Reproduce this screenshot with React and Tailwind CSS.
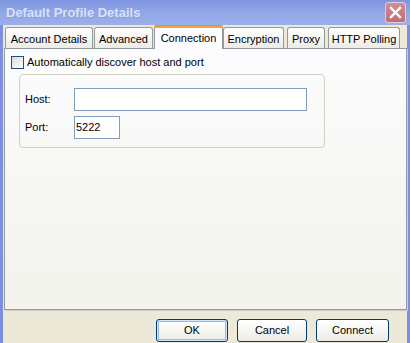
import React from 'react';

// XP-style "Luna" dialog, inactive window state.
const FONT = { fontFamily: '"Liberation Sans", Arial, sans-serif' };

const tabs = [
  { label: 'Account Details', w: 'w-[88px]', ml: 'ml-[1px]' },
  { label: 'Advanced', w: 'w-[59px]', ml: 'ml-[1px]' },
  { label: 'Connection', w: 'w-[69px]', ml: 'ml-[1px]', active: true },
  { label: 'Encryption', w: 'w-[61px]', ml: 'ml-0' },
  { label: 'Proxy', w: 'w-[38px]', ml: 'ml-[3px]' },
  { label: 'HTTP Polling', w: 'w-[72px]', ml: 'ml-[3px]' },
];

const Tab = ({ label, w, ml, active }) =>
  active ? (
    <div
      className={`${w} ${ml} relative z-10 h-[24px] -mb-px rounded-t-[3px] border border-b-0 border-[#919b9c] bg-[#fcfcfe] flex items-center justify-center text-[11px] text-black`}
    >
      <div className="absolute left-[-1px] right-[-1px] top-[-1px] h-[3px] rounded-t-[3px] bg-[#f1a83a] border-t border-[#e68b2c]" />
      <span className="pt-[1px]">{label}</span>
    </div>
  ) : (
    <div
      className={`${w} ${ml} h-[21px] rounded-t-[3px] border border-b-0 border-[#919b9c] bg-gradient-to-b from-white to-[#ecebe6] flex items-center justify-center text-[11px] text-black`}
    >
      <span className="pt-[2px]">{label}</span>
    </div>
  );

const Button = ({ children, isDefault }) => (
  <button
    className={`w-full h-[23px] rounded-[3px] border border-[#003c74] bg-gradient-to-b from-white to-[#ecebe6] text-[11px] text-black ${
      isDefault ? 'shadow-[inset_0_0_0_1px_#cee7ff,inset_0_0_0_2px_#98b8ea]' : ''
    }`}
  >
    {children}
  </button>
);

export default function App() {
  return (
    <div className="w-[410px] h-[343px] flex flex-col bg-[#ece9d8] overflow-hidden" style={FONT}>
      {/* title bar */}
      <div className="h-[25px] shrink-0 flex items-center justify-between bg-gradient-to-b from-[#7d95e0] via-[#91a7e8] to-[#9bb0ea] pl-[6px] pr-[4px]">
        <span
          className="text-[13px] font-bold text-[#d8e2f7]"
          style={{ textShadow: '1px 1px 0 #8a9fdc' }}
        >
          Default Profile Details
        </span>
        <div className="w-[21px] h-[21px] rounded-[3px] border border-[#e6cdd2] bg-gradient-to-b from-[#d48d95] to-[#c06c76] flex items-center justify-center">
          <svg width="13" height="13" viewBox="0 0 13 13">
            <path d="M2 2 L11 11 M11 2 L2 11" stroke="white" strokeWidth="2.4" strokeLinecap="square" />
          </svg>
        </div>
      </div>

      {/* body between blue frame edges */}
      <div className="flex-1 flex border-l-[3px] border-r-[3px] border-[#7e8ee2]">
        <div className="flex-1 flex flex-col pl-[1px]">
          {/* tab strip */}
          <div className="h-[23px] flex items-end">
            {tabs.map((t) => (
              <Tab key={t.label} {...t} />
            ))}
          </div>

          {/* tab page */}
          <div className="h-[262px] border border-[#919b9c] bg-gradient-to-b from-[#fcfcfe] to-[#f3f2ec] shadow-[1px_1px_0_#d0cfc5] pl-[6px] pt-[7px]">
            <label className="h-[13px] flex items-center gap-[3px] text-[11px] text-black">
              <span className="w-[13px] h-[13px] border border-[#1c5180] bg-gradient-to-br from-[#dcdcd5] to-white" />
              <span>Automatically discover host and port</span>
            </label>

            <div className="mt-[5px] ml-[8px] w-[306px] h-[74px] rounded-[4px] border border-[#d0d0bf] pl-[5px] pt-[13px] flex flex-col gap-[5px]">
              <div className="flex items-center">
                <span className="w-[49px] text-[11px] text-black">Host:</span>
                <div className="w-[233px] h-[23px] border border-[#7f9db9] bg-white" />
              </div>
              <div className="flex items-center">
                <span className="w-[49px] text-[11px] text-black">Port:</span>
                <div className="w-[46px] h-[23px] border border-[#7f9db9] bg-white flex items-center pl-[1px] text-[11px] text-black">
                  5222
                </div>
              </div>
            </div>
          </div>

          {/* buttons */}
          <div className="mt-[7px] flex justify-end gap-[9px] pr-[18px]">
            <div className="w-[72px]">
              <Button isDefault>OK</Button>
            </div>
            <div className="w-[70px]">
              <Button>Cancel</Button>
            </div>
            <div className="w-[73px]">
              <Button>Connect</Button>
            </div>
          </div>
        </div>
      </div>
    </div>
  );
}
